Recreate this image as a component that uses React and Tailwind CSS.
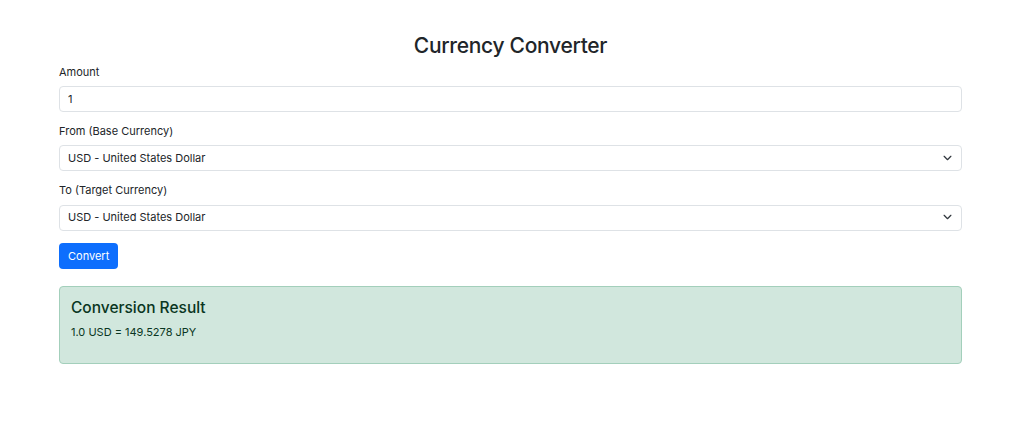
import { useState } from "react";

const Chevron = () => (
  <svg
    viewBox="0 0 16 16"
    className="pointer-events-none absolute right-[10px] top-1/2 h-[9px] w-[9px] -translate-y-1/2"
  >
    <path
      fill="none"
      stroke="#343a40"
      strokeLinecap="round"
      strokeLinejoin="round"
      strokeWidth="2.2"
      d="m2 5 6 6 6-6"
    />
  </svg>
);

const SelectField = ({ label, value, onChange }) => (
  <div className="mb-[11px]">
    <label className="mb-[4px] block text-[11px] leading-[17px]">{label}</label>
    <div className="relative">
      <select
        value={value}
        onChange={(e) => onChange(e.target.value)}
        className="h-[26px] w-full appearance-none rounded-[4px] border border-[#dee2e6] bg-white px-[8px] text-[11px] text-[#212529] outline-none"
      >
        <option value="USD">USD - United States Dollar</option>
        <option value="JPY">JPY - Japanese Yen</option>
        <option value="EUR">EUR - Euro</option>
      </select>
      <Chevron />
    </div>
  </div>
);

export default function App() {
  const [amount, setAmount] = useState("1");
  const [from, setFrom] = useState("USD");
  const [to, setTo] = useState("USD");

  return (
    <div className="min-h-[421px] bg-white font-['Inter','Liberation_Sans',sans-serif] text-[#212529]">
      <div className="ml-[59px] w-[903px] pt-[32px]">
        <h2 className="mb-[5px] text-center text-[21px] font-medium leading-[27px] tracking-[-0.3px]">
          Currency Converter
        </h2>

        <div className="mb-[11px]">
          <label className="mb-[4px] block text-[11px] leading-[17px]">Amount</label>
          <input
            type="number"
            value={amount}
            onChange={(e) => setAmount(e.target.value)}
            className="h-[26px] w-full rounded-[4px] border border-[#dee2e6] px-[8px] text-[11px] outline-none"
          />
        </div>

        <SelectField label="From (Base Currency)" value={from} onChange={setFrom} />
        <SelectField label="To (Target Currency)" value={to} onChange={setTo} />

        <button className="h-[26px] rounded-[4px] bg-[#0d6efd] px-[9px] text-[11px] text-white">
          Convert
        </button>

        <div className="mt-[17px] rounded-[4px] border border-[#a3cfbb] bg-[#d1e7dd] p-[11px] text-[#0a3622]">
          <h4 className="mb-[6px] text-[15.5px] font-medium leading-[20px]">Conversion Result</h4>
          <p className="mb-[11px] text-[11px] leading-[17px]">1.0 USD = 149.5278 JPY</p>
        </div>
      </div>
    </div>
  );
}
